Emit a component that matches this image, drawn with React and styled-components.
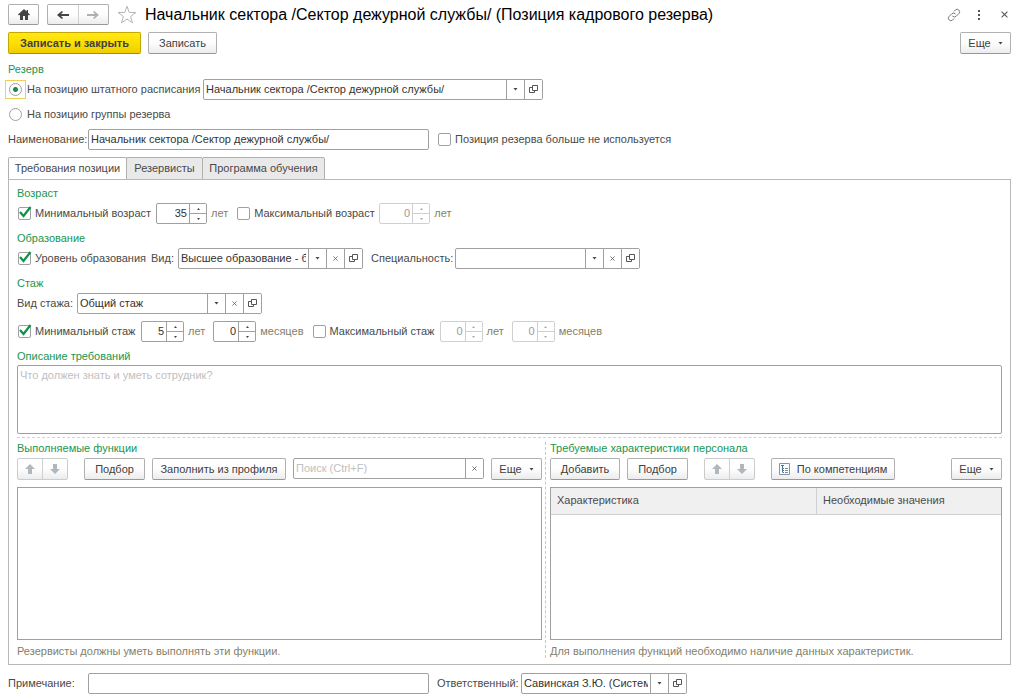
import React, { useId, useState } from "react";
import styled, { createGlobalStyle, css } from "styled-components";

const c = {
  text: "#4a4a4a",
  value: "#333333",
  green: "#1a9650",
  hint: "#85806a",
  border: "#a0a0a0",
  faint: "#d0d0d0",
  placeholder: "#c0c0c0",
};

const GlobalStyle = createGlobalStyle`
  *, *::before, *::after { box-sizing: border-box; }
  body { margin: 0; background: #fff; }
  body, button, input, textarea, table {
    font-family: "Liberation Sans", Arial, sans-serif;
    font-size: 11px;
    line-height: 14px;
    color: ${c.text};
  }
`;

const Page = styled.main`
  display: flex;
  flex-direction: column;
  min-height: 100vh;
  padding: 4px 13px 5px 8px;
`;

const Header = styled.header`
  display: flex;
  align-items: center;
  height: 21px;
`;

const Title = styled.h1`
  flex: 1;
  margin: 0 0 0 8px;
  font-size: 16px;
  line-height: 20px;
  font-weight: 400;
  color: #000;
  white-space: nowrap;
`;

const IconButton = styled.button`
  display: inline-flex;
  align-items: center;
  justify-content: center;
  width: ${(p) => p.$width || 16}px;
  height: 20px;
  padding: 0;
  border: 0;
  background: transparent;
  color: #555;
`;

const HeaderTools = styled.div`
  display: flex;
  gap: 9px;
  margin-right: -1px;
`;

const raised = css`
  border: 1px solid #b0b0b0;
  border-bottom-color: #989898;
  border-radius: 2px;
  background: linear-gradient(#fff 0%, #fdfdfd 50%, #ececec 100%);
`;

const Button = styled.button`
  display: inline-flex;
  flex: none;
  align-items: center;
  justify-content: center;
  gap: 7px;
  height: 22px;
  width: ${(p) => p.$width}px;
  padding: 0;
  white-space: nowrap;
  color: #404040;
  ${raised}
  ${(p) =>
    p.$primary &&
    css`
      font-weight: 700;
      border-color: #c4a800;
      border-bottom-color: #a89000;
      background: linear-gradient(#ffe815, #fbdc00 60%, #efcd00);
    `}
`;

const ButtonPair = styled.div`
  display: flex;
  flex: none;
  height: ${(p) => p.$height}px;
  width: ${(p) => p.$width}px;
  overflow: hidden;
  ${raised}
  ${(p) => p.$muted && "border-color: #cccccc;"}

  & > button { flex: 1; height: 100%; }
  & > button + button { border-left: 1px solid #d0d0d0; }
`;

const HomeButton = styled(Button)`
  height: 21px;
  margin-right: 8px;
`;

const StarButton = styled(IconButton)`
  margin-left: 8px;
`;

const CommandBar = styled.div`
  display: flex;
  gap: 7px;
  margin-top: 7px;

  & > :last-child { margin-left: auto; }
`;

const GroupTitle = styled.h2`
  margin: ${(p) => p.$top}px 0 0;
  font-size: 11px;
  line-height: 14px;
  font-weight: 400;
  color: ${c.green};
`;

const Row = styled.div`
  display: flex;
  align-items: center;
  gap: 8px;
  height: 21px;
  margin-top: ${(p) => p.$top}px;
  white-space: nowrap;
`;

const Field = styled.span`
  display: flex;
  flex: none;
  align-items: center;
  gap: 4px;
`;

const Choice = styled.label`
  display: inline-flex;
  flex: none;
  align-items: center;
  gap: 4px;
  width: ${(p) => (p.$width ? `${p.$width}px` : "auto")};
  padding-bottom: 1px;
`;

const FieldLabel = styled.label`
  flex: none;
  width: ${(p) => (p.$width ? `${p.$width}px` : "auto")};
  padding-bottom: 1px;
`;

const Unit = styled.span`
  padding-bottom: 1px;
  color: ${c.hint};
`;

const Radio = styled.input.attrs({ type: "radio" })`
  appearance: none;
  width: 13px;
  height: 13px;
  margin: 0 1px;
  border: 1px solid #a0a0a0;
  border-radius: 50%;
  background: #fff;

  &:checked {
    background: radial-gradient(circle, #12904a 0 2px, #fff 3px);
  }
`;

const RadioFrame = styled.span`
  display: flex;
  outline: ${(p) => (p.$current ? "1px solid #f0cf58" : "none")};
  outline-offset: 2px;
`;

const TickFrame = styled.span`
  display: grid;
  width: 14px;
  height: 14px;

  & > * { grid-area: 1 / 1; }
  & > svg { pointer-events: none; overflow: visible; }
`;

const Tick = styled.input.attrs({ type: "checkbox" })`
  appearance: none;
  width: 13px;
  height: 13px;
  margin: 1px 0 0 1px;
  border: 1px solid #a0a0a0;
  border-radius: 2px;
  background: #fff;
`;

const Box = styled.span`
  display: flex;
  flex: ${(p) => (p.$grow ? "1 1 0" : "none")};
  min-width: 0;
  width: ${(p) => p.$width}px;
  height: 21px;
  overflow: hidden;
  border: 1px solid ${(p) => (p.$muted ? c.faint : c.border)};
  border-radius: 2px;
  background: #fff;
`;

const Value = styled.input`
  flex: 1;
  min-width: 0;
  padding: 0 2px 1px;
  border: 0;
  outline: 0;
  background: transparent;
  color: ${c.value};
  text-align: ${(p) => (p.$number ? "right" : "left")};

  &::placeholder { color: ${c.placeholder}; opacity: 1; }
  &:disabled { color: #999; }
`;

const Segment = styled.button`
  display: flex;
  flex: none;
  align-items: center;
  justify-content: center;
  width: 18px;
  padding: 0 0 1px;
  border: 0;
  border-left: 1px solid ${c.border};
  background: #fff;
`;

const Spinner = styled.span`
  display: flex;
  flex-direction: column;
  width: 17px;
  border-left: 1px solid ${(p) => (p.$muted ? c.faint : c.border)};

  & > button {
    display: flex;
    flex: 1;
    align-items: center;
    justify-content: center;
    padding: 0;
    border: 0;
    background: #fff;
  }
  & > button + button { border-top: 1px solid ${(p) => (p.$muted ? c.faint : c.border)}; }
`;

const Tabs = styled.div`
  display: flex;
  margin: 7px 0 -1px;
`;

const Tab = styled.button`
  height: 23px;
  width: ${(p) => p.$width}px;
  margin-right: -1px;
  padding: 0 0 1px;
  border: 1px solid #b0b0b0;
  border-bottom-color: ${(p) => (p.$active ? "#fff" : "#b0b0b0")};
  border-radius: 2px 2px 0 0;
  background: ${(p) => (p.$active ? "#fff" : "#e9e9e9")};
  white-space: nowrap;
`;

const Panel = styled.section`
  display: flex;
  flex: 1;
  flex-direction: column;
  padding: 0 8px 6px;
  border: 1px solid #b8b8b8;
`;

const Notes = styled.textarea`
  display: block;
  width: 100%;
  height: 69px;
  margin-top: 2px;
  padding: 2px;
  border: 1px solid ${c.border};
  border-radius: 2px;
  outline: 0;
  resize: none;

  &::placeholder { color: ${c.placeholder}; opacity: 1; }
`;

const Split = styled.div`
  display: grid;
  flex: 1;
  grid-template-columns: minmax(0, 525fr) 8px minmax(0, 452fr);
  margin-top: 3px;
  border-top: 1px dashed #d4d4d4;
`;

const Divider = styled.div`
  width: 1px;
  margin: 4px 0 0 3px;
  border-left: 1px dashed #c8c8c8;
`;

const Column = styled.div`
  display: flex;
  flex-direction: column;
  min-width: 0;
`;

const Toolbar = styled.div`
  display: flex;
  gap: 7px;
  margin: 3px 0 7px;
`;

const Gap = styled.span`
  flex: ${(p) => (p.$grow ? "1" : "none")};
  width: 2px;
`;

const List = styled.div`
  flex: 1;
  min-height: 120px;
  border: 1px solid ${c.border};
`;

const Table = styled.table`
  width: 100%;
  border-collapse: collapse;
  table-layout: fixed;

  th {
    height: 26px;
    padding: 0 6px 1px;
    border-bottom: 1px solid #d0d0d0;
    background: #f0f0f0;
    font-weight: 400;
    text-align: left;
  }
  th:first-child { width: 59%; }
  th + th { border-left: 1px solid #d0d0d0; }
`;

const Hint = styled.p`
  margin: 4px 0 0;
  color: ${c.hint};
`;

const HomeIcon = () => (
  <svg width="12" height="11" viewBox="0 0 12 11" fill="#444">
    <path d="M6 0 0 5.6l1 1L2 5.8V11h3V7h2v4h3V5.8l1 .8 1-1-2-1.9V1H8.6v1.4z" />
  </svg>
);

const ArrowIcon = ({ right }) => (
  <svg width="12" height="8" viewBox="0 0 12 8" fill={right ? "#b0b0b0" : "#444"}>
    {right ? <path d="M0 3h8L6 1l1.200-1L12 4 7.200 8 6 7l2-2H0z" /> : <path d="M12 3H4l2-2-1.200-1L0 4l4.800 4L6 7 4 5h8z" />}
  </svg>
);

const MoveIcon = ({ down }) => (
  <svg width="10" height="10" viewBox="0 0 10 10" fill="#b2b7bb">
    {down ? <path d="M3 0h4v5h3l-5 5-5-5h3z" /> : <path d="M3 10h4V5h3L5 0 0 5h3z" />}
  </svg>
);

const StarIcon = () => (
  <svg width="20" height="19" viewBox="0 0 20 19" fill="#fff" stroke="#b5b5b5">
    <path d="m10 1.2 2.2 6.2 6.7.1-5.3 4 1.9 6.3-5.5-3.7-5.5 3.7 1.9-6.3-5.3-4 6.7-.1z" />
  </svg>
);

const LinkIcon = () => (
  <svg width="14" height="14" viewBox="0 0 14 14" fill="none" stroke="#777" strokeLinecap="round">
    <path d="M5.700 8.300a2.500 2.500 0 0 0 3.400 0l3-3a2.500 2.500 0 0 0-3.500-3.500L7.200 3.200" />
    <path d="M8.300 5.700a2.500 2.500 0 0 0-3.400 0l-3 3a2.500 2.500 0 0 0 3.500 3.500l1.400-1.400" />
  </svg>
);

const DotsIcon = () => (
  <svg width="2" height="10" viewBox="0 0 2 10" fill="#555">
    <path d="M0 0h2v2H0zM0 4h2v2H0zM0 8h2v2H0z" />
  </svg>
);

const CrossIcon = ({ size = 5 }) => (
  <svg width={size} height={size} viewBox="0 0 6 6" stroke="#555" strokeWidth=".9">
    <path d="m.5.5 5 5M5.500.5l-5 5" />
  </svg>
);

const CaretIcon = () => (
  <svg width="5" height="3" viewBox="0 0 5 3" fill="#444">
    <path d="M.5 0h4l-2 2.500z" />
  </svg>
);

const OpenIcon = () => (
  <svg width="9" height="8" viewBox="0 0 9 8" fill="#fff" stroke="#555">
    <path d="M.5 2.500h5v5h-5z" />
    <path d="M3.500.5h5v5h-5z" />
  </svg>
);

const SpinIcon = ({ down, muted }) => (
  <svg width="3" height="2" viewBox="0 0 3 2" fill={muted ? "#aaa" : "#444"}>
    {down ? <path d="M0 0h3L1.500 2z" /> : <path d="M0 2h3L1.500 0z" />}
  </svg>
);

const TickIcon = () => (
  <svg width="14" height="14" viewBox="0 0 14 14" fill="none" stroke="#0f9148" strokeWidth="2.200">
    <path d="m3 6 3.500 4L13.500 1" />
  </svg>
);

const TreeIcon = () => (
  <svg width="11" height="12" viewBox="0 0 11 12" fill="none">
    <path d="M.5.5h10v11H.5z" stroke="#8496a4" fill="#fafcfd" />
    <path d="M2 2.500h3M3.500 3v6.500M4 5.500h1M4 7.500h1M4 9.500h1" stroke="#4f7690" />
    <path d="M6 5.500h3M6 7.500h3M6 9.500h3" stroke="#7f929f" />
  </svg>
);

function Checkbox({ label, initial = false, width }) {
  const [on, setOn] = useState(initial);
  return (
    <Choice $width={width}>
      <TickFrame>
        <Tick checked={on} onChange={() => setOn(!on)} />
        {on && <TickIcon />}
      </TickFrame>
      {label}
    </Choice>
  );
}

function Combo({ id, name, value, width, clearable }) {
  return (
    <Box $width={width}>
      <Value id={id} aria-label={id ? undefined : name} defaultValue={value} />
      <Segment aria-label="Выбрать"><CaretIcon /></Segment>
      {clearable && <Segment aria-label="Очистить"><CrossIcon /></Segment>}
      <Segment aria-label="Открыть"><OpenIcon /></Segment>
    </Box>
  );
}

function NumberField({ name, unit, value, width = 43, muted }) {
  const [n, setN] = useState(value);
  return (
    <Field>
      <Box $width={width} $muted={muted}>
        <Value
          $number
          aria-label={name}
          inputMode="numeric"
          value={n}
          disabled={muted}
          onChange={(e) => setN(Number(e.target.value) || 0)}
        />
        <Spinner $muted={muted}>
          <button aria-label="Больше" disabled={muted} onClick={() => setN(n + 1)}><SpinIcon muted={muted} /></button>
          <button aria-label="Меньше" disabled={muted} onClick={() => setN(Math.max(0, n - 1))}><SpinIcon down muted={muted} /></button>
        </Spinner>
      </Box>
      <Unit>{unit}</Unit>
    </Field>
  );
}

const MoveButtons = () => (
  <ButtonPair $width={51} $height={22} $muted>
    <IconButton aria-label="Вверх"><MoveIcon /></IconButton>
    <IconButton aria-label="Вниз"><MoveIcon down /></IconButton>
  </ButtonPair>
);

const MoreButton = () => (
  <Button $width={51}>Еще<CaretIcon /></Button>
);

const TABS = [
  ["Требования позиции", 119],
  ["Резервисты", 77],
  ["Программа обучения", 123],
];

export default function App() {
  const id = useId();
  const [target, setTarget] = useState("staff");
  const [tab, setTab] = useState(0);

  return (
    <>
      <GlobalStyle />
      <Page>
        <Header>
          <HomeButton $width={31} aria-label="Домой"><HomeIcon /></HomeButton>
          <ButtonPair $width={62} $height={21}>
            <IconButton aria-label="Назад"><ArrowIcon /></IconButton>
            <IconButton aria-label="Вперед"><ArrowIcon right /></IconButton>
          </ButtonPair>
          <StarButton $width={20} aria-label="В избранное"><StarIcon /></StarButton>
          <Title>Начальник сектора /Сектор дежурной службы/ (Позиция кадрового резерва)</Title>
          <HeaderTools>
            <IconButton aria-label="Ссылка"><LinkIcon /></IconButton>
            <IconButton aria-label="Меню"><DotsIcon /></IconButton>
            <IconButton aria-label="Закрыть"><CrossIcon size={7} /></IconButton>
          </HeaderTools>
        </Header>

        <CommandBar>
          <Button $primary $width={133}>Записать и закрыть</Button>
          <Button $width={69}>Записать</Button>
          <MoreButton />
        </CommandBar>

        <GroupTitle $top={8}>Резерв</GroupTitle>
        <Row $top={3}>
          <Choice $width={187}>
            <RadioFrame $current={target === "staff"}>
              <Radio name="target" checked={target === "staff"} onChange={() => setTarget("staff")} />
            </RadioFrame>
            На позицию штатного расписания
          </Choice>
          <Combo name="Позиция штатного расписания" value="Начальник сектора /Сектор дежурной службы/" width={340} />
        </Row>
        <Row $top={4}>
          <Choice>
            <RadioFrame $current={target === "group"}>
              <Radio name="target" checked={target === "group"} onChange={() => setTarget("group")} />
            </RadioFrame>
            На позицию группы резерва
          </Choice>
        </Row>
        <Row $top={4}>
          <FieldLabel htmlFor={`${id}-name`} $width={72}>Наименование:</FieldLabel>
          <Box $width={341}>
            <Value id={`${id}-name`} defaultValue="Начальник сектора /Сектор дежурной службы/" />
          </Box>
          <Checkbox label="Позиция резерва больше не используется" />
        </Row>

        <Tabs role="tablist">
          {TABS.map(([title, width], i) => (
            <Tab key={title} role="tab" aria-selected={tab === i} $active={tab === i} $width={width} onClick={() => setTab(i)}>
              {title}
            </Tab>
          ))}
        </Tabs>

        <Panel>
          <GroupTitle $top={6}>Возраст</GroupTitle>
          <Row $top={3}>
            <Checkbox label="Минимальный возраст" initial width={131} />
            <NumberField name="Минимальный возраст, лет" unit="лет" value={35} width={51} />
            <Checkbox label="Максимальный возраст" width={135} />
            <NumberField name="Максимальный возраст, лет" unit="лет" value={0} width={51} muted />
          </Row>

          <GroupTitle $top={7}>Образование</GroupTitle>
          <Row $top={3}>
            <Checkbox label="Уровень образования" initial width={126} />
            <Field>
              <FieldLabel htmlFor={`${id}-kind`} $width={23}>Вид:</FieldLabel>
              <Combo id={`${id}-kind`} value="Высшее образование - бакалавриат" width={185} clearable />
            </Field>
            <Field>
              <FieldLabel htmlFor={`${id}-spec`} $width={80}>Специальность:</FieldLabel>
              <Combo id={`${id}-spec`} value="" width={185} clearable />
            </Field>
          </Row>

          <GroupTitle $top={7}>Стаж</GroupTitle>
          <Row $top={3}>
            <FieldLabel htmlFor={`${id}-exp`} $width={52}>Вид стажа:</FieldLabel>
            <Combo id={`${id}-exp`} value="Общий стаж" width={185} clearable />
          </Row>
          <Row $top={7}>
            <Checkbox label="Минимальный стаж" initial width={116} />
            <NumberField name="Минимальный стаж, лет" unit="лет" value={5} />
            <NumberField name="Минимальный стаж, месяцев" unit="месяцев" value={0} />
            <Checkbox label="Максимальный стаж" width={120} />
            <NumberField name="Максимальный стаж, лет" unit="лет" value={0} muted />
            <NumberField name="Максимальный стаж, месяцев" unit="месяцев" value={0} muted />
          </Row>

          <GroupTitle $top={7}>Описание требований</GroupTitle>
          <Notes aria-label="Описание требований" placeholder="Что должен знать и уметь сотрудник?" />

          <Split>
            <Column>
              <GroupTitle $top={3}>Выполняемые функции</GroupTitle>
              <Toolbar>
                <MoveButtons />
                <Gap />
                <Button $width={61}>Подбор</Button>
                <Button $width={134}>Заполнить из профиля</Button>
                <Box $grow>
                  <Value aria-label="Поиск" placeholder="Поиск (Ctrl+F)" />
                  <Segment aria-label="Очистить"><CrossIcon /></Segment>
                </Box>
                <MoreButton />
              </Toolbar>
              <List />
              <Hint>Резервисты должны уметь выполнять эти функции.</Hint>
            </Column>
            <Divider />
            <Column>
              <GroupTitle $top={3}>Требуемые характеристики персонала</GroupTitle>
              <Toolbar>
                <Button $width={70}>Добавить</Button>
                <Button $width={61}>Подбор</Button>
                <Gap />
                <MoveButtons />
                <Gap />
                <Button $width={124}><TreeIcon />По компетенциям</Button>
                <Gap $grow />
                <MoreButton />
              </Toolbar>
              <List>
                <Table>
                  <thead>
                    <tr>
                      <th scope="col">Характеристика</th>
                      <th scope="col">Необходимые значения</th>
                    </tr>
                  </thead>
                </Table>
              </List>
              <Hint>Для выполнения функций необходимо наличие данных характеристик.</Hint>
            </Column>
          </Split>
        </Panel>

        <Row $top={8}>
          <FieldLabel htmlFor={`${id}-note`} $width={72}>Примечание:</FieldLabel>
          <Box $width={341}>
            <Value id={`${id}-note`} />
          </Box>
          <Field>
            <FieldLabel htmlFor={`${id}-owner`} $width={80}>Ответственный:</FieldLabel>
            <Combo id={`${id}-owner`} value="Савинская З.Ю. (Системный администратор)" width={166} />
          </Field>
        </Row>
      </Page>
    </>
  );
}
